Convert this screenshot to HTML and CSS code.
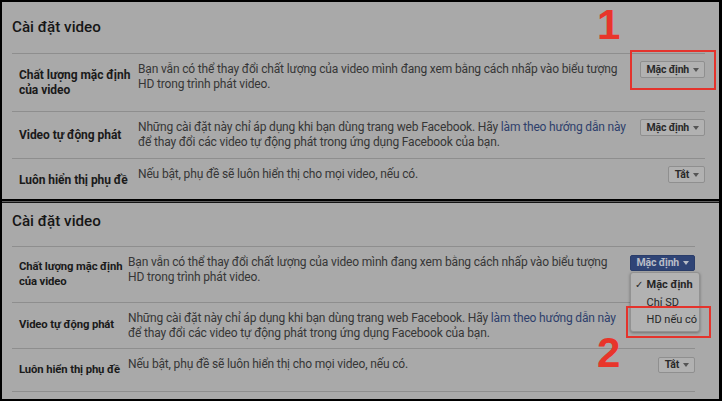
FILE: index.html
```html
<!DOCTYPE html>
<html lang="vi">
<head>
<meta charset="utf-8">
<title>Cài đặt video</title>
<link rel="stylesheet" href="styles.css">
</head>
<body>
<div class="page">
  <section class="panel p1">
    <h2 class="head">Cài đặt video</h2>
    <div class="row">
      <div class="label">Chất lượng mặc định<br>của video</div>
      <div class="desc">Bạn vẫn có thể thay đổi chất lượng của video mình đang xem bằng cách nhấp vào biểu tượng<br>HD trong trình phát video.</div>
      <div class="ctl"><span class="btn">Mặc định<i class="caret"></i></span></div>
    </div>
    <div class="row">
      <div class="label">Video tự động phát</div>
      <div class="desc">Những cài đặt này chỉ áp dụng khi bạn dùng trang web Facebook. Hãy <a class="link">làm theo hướng dẫn này</a><br>để thay đổi các video tự động phát trong ứng dụng Facebook của bạn.</div>
      <div class="ctl"><span class="btn">Mặc định<i class="caret"></i></span></div>
    </div>
    <div class="row">
      <div class="label">Luôn hiển thị phụ đề</div>
      <div class="desc">Nếu bật, phụ đề sẽ luôn hiển thị cho mọi video, nếu có.</div>
      <div class="ctl"><span class="btn">Tắt<i class="caret"></i></span></div>
    </div>
  </section>
  <div class="sep"></div>
  <section class="panel p2">
    <h2 class="head">Cài đặt video</h2>
    <div class="row">
      <div class="label">Chất lượng mặc định<br>của video</div>
      <div class="desc">Bạn vẫn có thể thay đổi chất lượng của video mình đang xem bằng cách nhấp vào biểu tượng<br>HD trong trình phát video.</div>
      <div class="ctl">
        <span class="btn btn-open">Mặc định<i class="caret"></i></span>
        <ul class="menu">
          <li class="item sel"><span class="check">✓</span>Mặc định</li>
          <li class="item">Chỉ SD</li>
          <li class="item">HD nếu có</li>
        </ul>
      </div>
    </div>
    <div class="row">
      <div class="label">Video tự động phát</div>
      <div class="desc">Những cài đặt này chỉ áp dụng khi bạn dùng trang web Facebook. Hãy <a class="link">làm theo hướng dẫn này</a><br>để thay đổi các video tự động phát trong ứng dụng Facebook của bạn.</div>
      <div class="ctl"></div>
    </div>
    <div class="row row-last">
      <div class="label">Luôn hiển thị phụ đề</div>
      <div class="desc">Nếu bật, phụ đề sẽ luôn hiển thị cho mọi video, nếu có.</div>
      <div class="ctl"><span class="btn">Tắt<i class="caret"></i></span></div>
    </div>
  </section>

  <div class="mark mark-box box1"></div>
  <div class="mark num num1">1</div>
  <div class="mark mark-box box2"></div>
  <div class="mark num num2">2</div>
</div>
</body>
</html>
```

FILE: styles.css
```css
html, body {
  margin: 0;
  background: #000;
}
body {
  width: 722px;
  height: 401px;
  overflow: hidden;
  font-family: Roboto, "Liberation Sans", Arial, sans-serif;
}
.page {
  position: relative;
  box-sizing: border-box;
  height: 401px;
  padding: 2px 3px 2px 2px;
  display: flex;
  flex-direction: column;
}
.panel {
  background: #a9a9a9;
  overflow: hidden;
  flex: none;
}
.p1 {
  height: 197px;
  padding: 0 14px 0 10px;
}
.p2 {
  height: 196px;
  padding: 0 24px 0 10px;
}
.sep {
  flex: none;
  height: 4px;
  background: linear-gradient(#000 0 2px, #5e5e5e 2px 3px, #141414 3px 4px);
}
.head {
  margin: 0;
  font-size: 15.2px;
  font-weight: 500;
  line-height: 20px;
  color: #161616;
  border-bottom: 1px solid #8e8e8e;
}
.p1 .head { padding: 15px 0 16px 0; }
.p2 .head { padding: 8px 0 15px 0; }

.row {
  display: grid;
  grid-template-columns: 119px 1fr auto;
  padding: 8px 0 8px 7px;
  border-bottom: 1px solid #8e8e8e;
  font-size: 12px;
  line-height: 15px;
}
.p2 .row {
  grid-template-columns: 109px 1fr auto;
  line-height: 14.5px;
}
.p2 .row-last { min-height: 26px; }
.label {
  align-self: center;
  margin: 5.5px 0;
  font-weight: 700;
  color: #1a1a1a;
  white-space: nowrap;
  letter-spacing: -0.05px;
}
.p2 .label {
  margin: 5px 0;
  font-size: 11.3px;
  letter-spacing: -0.12px;
}
.desc {
  align-self: start;
  white-space: nowrap;
  color: #363636;
  letter-spacing: -0.16px;
}
.link { color: #2e3f6c; }
.ctl {
  align-self: start;
  position: relative;
}
.btn {
  display: inline-flex;
  align-items: center;
  box-sizing: border-box;
  height: 17px;
  margin-top: -1px;
  padding: 0 5px 0 6px;
  border: 1px solid #8f8f8f;
  border-radius: 2px;
  background: #b1b1b1;
  color: #2a2a2a;
  font-size: 10.5px;
  font-weight: 700;
  letter-spacing: -0.2px;
  line-height: 15px;
  white-space: nowrap;
}
.caret {
  display: inline-block;
  width: 0;
  height: 0;
  margin-left: 4px;
  border-left: 3.5px solid transparent;
  border-right: 3.5px solid transparent;
  border-top: 4px solid #555;
}
.p2 .btn { height: 16px; }
.btn-open {
  background: #2f4476;
  border-color: #2a3d6a;
  color: #b8bcc6;
}
.btn-open .caret { border-top-color: #b8bcc6; }
.menu {
  position: absolute;
  left: 0;
  top: 17px;
  width: 70px;
  box-sizing: border-box;
  height: 60px;
  margin: 0;
  padding: 3px 0 0;
  list-style: none;
  background: #b2b2b2;
  border: 1px solid #929292;
  border-radius: 3px;
  box-shadow: 0 1px 3px rgba(0, 0, 0, 0.35);
  z-index: 2;
}
.item {
  position: relative;
  padding-left: 16px;
  height: 17.5px;
  line-height: 17px;
  font-size: 11px;
  color: #262626;
  white-space: nowrap;
}
.item.sel { font-weight: 700; }
.check {
  position: absolute;
  left: 4px;
  top: 0;
  font-weight: 400;
  font-size: 10px;
}

.mark { position: absolute; }
.mark-box {
  box-sizing: border-box;
  border: 2px solid #e4332c;
}
.box1 { left: 630px; top: 50px; width: 86px; height: 40px; }
.box2 { left: 626px; top: 306px; width: 85px; height: 32px; z-index: 3; }
.num {
  font-family: "Liberation Sans", Arial, sans-serif;
  font-weight: 700;
  font-size: 42px;
  line-height: 42px;
  color: #e8352b;
}
.num1 { left: 597px; top: 4px; }
.num2 { left: 597px; top: 332px; }
```
